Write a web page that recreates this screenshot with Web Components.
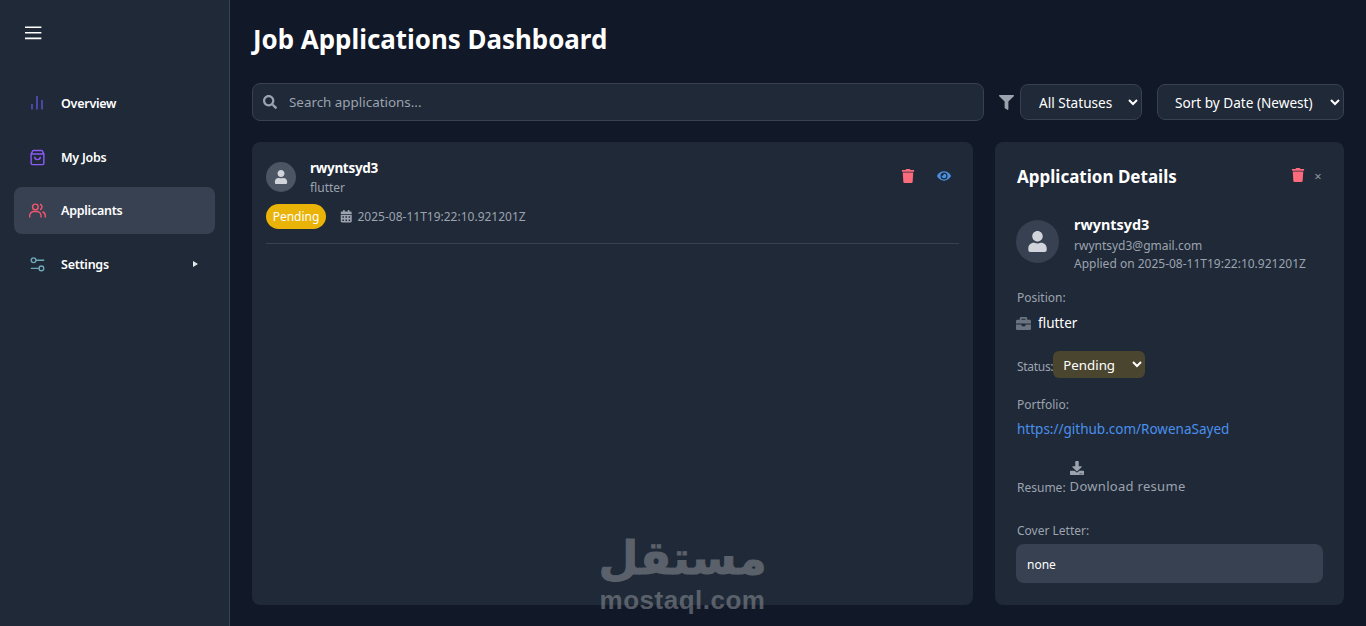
<!DOCTYPE html>
<html lang="en">
<head>
<meta charset="utf-8">
<title>Job Applications Dashboard</title>
<style>
html, body { margin: 0; height: 100%; background: #111827; }
body { font-family: "Noto Sans", "Open Sans", sans-serif; color: #fff; overflow: hidden; }
</style>
</head>
<body>
<dash-app></dash-app>
<script>
const ICONS = {
	user: ['0 0 448 512', 'M224 256c70.7 0 128-57.3 128-128S294.7 0 224 0 96 57.3 96 128s57.3 128 128 128zm89.6 32h-16.7c-22.2 10.2-46.9 16-72.9 16s-50.6-5.8-72.9-16h-16.7C60.2 288 0 348.2 0 422.4V464c0 26.5 21.5 48 48 48h352c26.5 0 48-21.5 48-48v-41.6c0-74.2-60.2-134.4-134.4-134.4z'],
	trash: ['0 0 448 512', 'M432 32H312l-9.4-18.7A24 24 0 0 0 281.1 0H166.8a23.72 23.72 0 0 0-21.4 13.3L136 32H16A16 16 0 0 0 0 48v32a16 16 0 0 0 16 16h416a16 16 0 0 0 16-16V48a16 16 0 0 0-16-16zM53.2 467a48 48 0 0 0 47.9 45h245.8a48 48 0 0 0 47.9-45L416 128H32z'],
	eye: ['0 0 576 512', 'M572.52 241.4C518.29 135.59 410.93 64 288 64S57.68 135.64 3.48 241.41a32.35 32.35 0 0 0 0 29.19C57.71 376.41 165.07 448 288 448s230.32-71.64 284.52-177.41a32.35 32.35 0 0 0 0-29.19zM288 400a144 144 0 1 1 144-144 143.93 143.93 0 0 1-144 144zm0-240a95.31 95.31 0 0 0-25.31 3.79 47.85 47.85 0 0 1-66.9 66.9A95.78 95.78 0 1 0 288 160z'],
	filter: ['0 0 512 512', 'M487.976 0H24.028C2.71 0-8.047 25.866 7.058 40.971L192 225.941V432c0 7.831 3.821 15.17 10.237 19.662l80 55.98C298.02 518.69 320 507.493 320 487.98V225.941l184.947-184.97C520.021 25.896 509.338 0 487.976 0z'],
	search: ['0 0 512 512', 'M505 442.7L405.3 343c-4.5-4.5-10.6-7-17-7H372c27.6-35.3 44-79.7 44-128C416 93.1 322.9 0 208 0S0 93.1 0 208s93.1 208 208 208c48.3 0 92.7-16.4 128-44v16.3c0 6.4 2.5 12.5 7 17l99.7 99.7c9.4 9.4 24.6 9.4 33.9 0l28.3-28.3c9.4-9.4 9.4-24.6.1-34zM208 336c-70.7 0-128-57.2-128-128 0-70.7 57.2-128 128-128 70.7 0 128 57.2 128 128 0 70.7-57.2 128-128 128z'],
	calendar: ['0 0 448 512', 'M0 464c0 26.5 21.5 48 48 48h352c26.5 0 48-21.5 48-48V192H0v272zm320-196c0-6.6 5.4-12 12-12h40c6.6 0 12 5.4 12 12v40c0 6.6-5.4 12-12 12h-40c-6.6 0-12-5.4-12-12v-40zm0 128c0-6.6 5.4-12 12-12h40c6.6 0 12 5.4 12 12v40c0 6.6-5.4 12-12 12h-40c-6.6 0-12-5.4-12-12v-40zM192 268c0-6.6 5.4-12 12-12h40c6.6 0 12 5.4 12 12v40c0 6.6-5.4 12-12 12h-40c-6.6 0-12-5.4-12-12v-40zm0 128c0-6.6 5.4-12 12-12h40c6.6 0 12 5.4 12 12v40c0 6.6-5.4 12-12 12h-40c-6.6 0-12-5.4-12-12v-40zM64 268c0-6.6 5.4-12 12-12h40c6.6 0 12 5.4 12 12v40c0 6.6-5.4 12-12 12H76c-6.6 0-12-5.4-12-12v-40zm0 128c0-6.6 5.4-12 12-12h40c6.6 0 12 5.4 12 12v40c0 6.6-5.4 12-12 12H76c-6.6 0-12-5.4-12-12v-40zM400 64h-48V16c0-8.8-7.2-16-16-16h-32c-8.8 0-16 7.2-16 16v48H160V16c0-8.8-7.2-16-16-16h-32c-8.8 0-16 7.2-16 16v48H48C21.5 64 0 85.5 0 112v48h448v-48c0-26.5-21.5-48-48-48z'],
	briefcase: ['0 0 512 512', 'M320 336c0 8.84-7.16 16-16 16h-96c-8.84 0-16-7.16-16-16v-48H0v144c0 25.6 22.4 48 48 48h416c25.6 0 48-22.4 48-48V288H320v48zm144-208h-80V80c0-25.6-22.4-48-48-48H176c-25.6 0-48 22.4-48 48v48H48c-25.6 0-48 22.4-48 48v80h512v-80c0-25.6-22.4-48-48-48zm-144 0H192V96h128v32z'],
	download: ['0 0 512 512', 'M216 0h80c13.3 0 24 10.7 24 24v168h87.7c17.8 0 26.7 21.5 14.1 34.1L269.7 378.3c-7.5 7.5-19.8 7.5-27.3 0L90.1 226.1c-12.6-12.6-3.7-34.1 14.1-34.1H192V24c0-13.3 10.7-24 24-24zm296 376v112c0 13.3-10.7 24-24 24H24c-13.3 0-24-10.7-24-24V376c0-13.3 10.7-24 24-24h146.7l49 49c20.1 20.1 52.5 20.1 72.6 0l49-49H488c13.3 0 24 10.7 24 24zm-124 88c0-11-9-20-20-20s-20 9-20 20 9 20 20 20 20-9 20-20zm64 0c0-11-9-20-20-20s-20 9-20 20 9 20 20 20 20-9 20-20z']
};
const NAV_ICONS = {
	overview: '<path d="M4.2 20.5v-7.8M11.3 20.5V1.4M18.4 20.5V7"/>',
	jobs: '<path d="M6.5 2h11a1.5 1.5 0 0 1 1.5 1l2 4v13a2 2 0 0 1-2 2H5a2 2 0 0 1-2-2V7l2-4a1.500 1.500 0 0 1 1.500-1zM3 7h18"/><path d="M8 11a4 4 0 0 0 8 0"/>',
	applicants: '<circle cx="9" cy="7" r="4"/><path d="M1 22v-2.500a6 6 0 0 1 6-6h4a6 6 0 0 1 6 6V22"/><path d="M15.500 3.200a4 4 0 0 1 0 7.700M19 13.800a6 6 0 0 1 4 5.700V22"/>',
	settings: '<circle cx="6.500" cy="6" r="3.300"/><circle cx="17.500" cy="17.500" r="3.300"/><path d="M10 6h11.500M2.500 17.500H14"/>'
};

class FaIcon extends HTMLElement {
	constructor() {
		super();
		const [box, d] = ICONS[this.getAttribute('name')];
		this.attachShadow({ mode: 'open' }).innerHTML = `<style>
:host { display: inline-flex; flex: none; width: var(--size, 14px); height: var(--size, 14px); color: inherit; }
svg { width: 100%; height: 100%; fill: currentColor; display: block; }
</style><svg viewBox="${box}"><path d="${d}"/></svg>`;
	}
}

class NavItem extends HTMLElement {
	constructor() {
		super();
		const icon = NAV_ICONS[this.getAttribute('icon')];
		const arrow = this.hasAttribute('arrow') ? '<span id="arrow"></span>' : '';
		this.attachShadow({ mode: 'open' }).innerHTML = `<style>
:host { display: flex; align-items: center; height: 47px; padding: 0 17px 0 15px; gap: 15px; border-radius: 8px; font-size: 12.5px; letter-spacing: -.25px; font-weight: 600; color: #fff; }
:host([active]) { background: #374151; }
svg { width: 17px; height: 17px; flex: none; fill: none; stroke: var(--c); stroke-width: 2; }
#label { flex: 1; }
#arrow { border-left: 5px solid #e5e7eb; border-top: 3px solid transparent; border-bottom: 3px solid transparent; }
</style><svg viewBox="0 0 24 24">${icon}</svg><span id="label"><slot></slot></span>${arrow}`;
	}
}

class AppSidebar extends HTMLElement {
	constructor() {
		super();
		this.attachShadow({ mode: 'open' }).innerHTML = `<style>
:host { display: flex; flex-direction: column; width: 229px; flex: none; box-sizing: content-box; background: #1f2937; border-right: 1px solid #374151; }
#burger { display: block; width: 17px; height: 14px; margin: 26px 0 0 25px; }
nav { display: flex; flex-direction: column; gap: 6px; margin: 39.850px 14px 0 14px; }
nav-item[icon="overview"], nav-item[icon="applicants"] { margin-bottom: 1px; }
</style>
<svg id="burger" viewBox="0 0 17 14" fill="none" stroke="#fff" stroke-width="1.6"><path d="M0 1.2h16.4M0 6.8h16.4M0 12.4h16.4"/></svg>
<nav>
<nav-item icon="overview" style="--c:#5b54d6">Overview</nav-item>
<nav-item icon="jobs" style="--c:#8b5cf6">My Jobs</nav-item>
<nav-item icon="applicants" active style="--c:#f0566f">Applicants</nav-item>
<nav-item icon="settings" arrow style="--c:#6fa8b8">Settings</nav-item>
</nav>`;
	}
}

class SearchBar extends HTMLElement {
	constructor() {
		super();
		this.attachShadow({ mode: 'open' }).innerHTML = `<style>
:host { display: flex; flex: 1; align-items: center; gap: 12px; height: 38px; box-sizing: border-box; padding: 0 10px; background: #1f2937; border: 1px solid #374151; border-radius: 8px; color: #9ca3af; }
fa-icon { --size: 14px; }
input { flex: 1; min-width: 0; background: none; border: 0; outline: 0; padding: 0 0 1px; font: 13.4px "Noto Sans", "Open Sans", sans-serif; color: #fff; }
input::placeholder { color: #9ca3af; opacity: 1; }
</style><fa-icon name="search"></fa-icon><input placeholder="Search applications...">`;
	}
}

class FilterBar extends HTMLElement {
	constructor() {
		super();
		this.attachShadow({ mode: 'open' }).innerHTML = `<style>
:host { display: flex; align-items: center; }
fa-icon { --size: 15px; color: #9ca3af; margin: 0 6px 0 15px; }
select { height: 36px; padding: 0 2px 0 14px; background: #1f2937; color: #fff; border: 1px solid #374151; border-radius: 8px; font: 13.6px "Noto Sans", "Open Sans", sans-serif; outline: 0; }
#st { width: 122px; }
#so { width: 187px; margin-left: 15px; padding-left: 13px; }
</style>
<fa-icon name="filter"></fa-icon>
<select id="st"><option>All Statuses</option></select>
<select id="so"><option>Sort by Date (Newest)</option></select>`;
	}
}

class AppCard extends HTMLElement {
	constructor() {
		super();
		this.attachShadow({ mode: 'open' }).innerHTML = `<style>
:host { display: flex; flex-direction: column; padding: 20px 14px; background: #1f2937; border-radius: 8px; min-width: 0; box-sizing: border-box; }
#top { display: flex; gap: 14px; align-items: center; height: 30px; }
#avatar { width: 30px; height: 30px; border-radius: 50%; background: #4b5563; color: #d1d5db; display: flex; align-items: center; justify-content: center; --size: 14px; }
#who { flex: 1; display: flex; flex-direction: column; margin-top: 4px; }
#name { font-size: 13.5px; letter-spacing: -.3px; font-weight: 700; line-height: 19px; margin-top: -1px; }
#job { font-size: 12px; color: #9ca3af; line-height: 20px; }
#actions { display: flex; gap: 22px; padding-right: 8px; align-self: flex-start; margin-top: 7px; }
#del { color: #fb6b7c; --size: 14px; }
#view { color: #4a90e2; --size: 14px; }
#meta { display: flex; align-items: center; margin-top: 12px; padding-bottom: 14px; border-bottom: 1px solid #374151; }
#pill { height: 25px; width: 60px; border-radius: 13px; background: #eab308; font-size: 12px; display: flex; align-items: center; justify-content: center; }
#date { display: flex; align-items: center; gap: 5px; margin-left: 14px; font-size: 12px; color: #9ca3af; --size: 12.5px; }
</style>
<div id="top">
<div id="avatar"><fa-icon name="user"></fa-icon></div>
<div id="who"><span id="name">rwyntsyd3</span><span id="job">flutter</span></div>
<div id="actions"><fa-icon id="del" name="trash"></fa-icon><fa-icon id="view" name="eye"></fa-icon></div>
</div>
<div id="meta"><span id="pill">Pending</span><span id="date"><fa-icon name="calendar"></fa-icon>2025-08-11T19:22:10.921201Z</span></div>`;
	}
}

class DetailsPanel extends HTMLElement {
	constructor() {
		super();
		this.attachShadow({ mode: 'open' }).innerHTML = `<style>
:host { display: flex; flex-direction: column; padding: 0 21px; background: #1f2937; border-radius: 8px; box-sizing: border-box; font-size: 12px; color: #9ca3af; }
#head { display: flex; align-items: center; height: 68px; }
h2 { flex: 1; margin: 0; padding-left: 1px; font-size: 17px; font-weight: 700; color: #fff; }
#del { color: #fb6b7c; --size: 14px; margin-top: -2px; }
#close { color: #8b95a5; font-size: 13px; margin-left: 8px; width: 10px; text-align: center; }
#who { display: flex; gap: 15px; margin-top: 10px; height: 57px; }
#avatar { width: 43px; height: 43px; border-radius: 50%; background: #374151; color: #d1d5db; display: flex; align-items: center; justify-content: center; --size: 21px; flex: none; }
#info { display: flex; flex-direction: column; line-height: 18px; margin-top: -5px; }
#name { font-size: 14.4px; font-weight: 700; color: #fff; line-height: 20px; margin-bottom: 2px; }
.label { display: block; padding-left: 1px; }
#pos { margin-top: 12px; }
#posv { display: flex; align-items: center; gap: 7px; margin-top: 8px; color: #fff; font-size: 13.5px; }
#posv fa-icon { --size: 15px; color: #6b7280; }
#status { display: flex; align-items: center; margin-top: 19px; padding-left: 1px; }
#status span { margin-top: 3px; letter-spacing: -.3px; }
select { width: 92px; height: 27px; padding: 0 0 0 6px; background: #4a452e; color: #fff; border: 0; border-radius: 6px; font: 13.3px "Noto Sans", "Open Sans", sans-serif; outline: 0; }
#port { margin-top: 18px; }
a { display: block; margin-top: 7px; padding-left: 1px; color: #4a90ee; font-size: 13.5px; text-decoration: none; }
#res { display: flex; align-items: flex-end; gap: 4px; margin-top: 23px; padding-left: 1px; }
#res > span { margin-bottom: -1px; }
#dl { display: flex; flex-direction: column; align-items: flex-start; font-size: 13px; letter-spacing: .3px; }
#dl fa-icon { --size: 14px; color: #9ca3af; margin-bottom: 2px; }
#cov { margin-top: 27px; }
#box { margin-top: 5px; height: 39px; box-sizing: border-box; padding: 1px 11px 0; background: #374151; border-radius: 8px; color: #fff; display: flex; align-items: center; font-size: 12px; }
</style>
<div id="head"><h2>Application Details</h2><fa-icon id="del" name="trash"></fa-icon><span id="close">×</span></div>
<div id="who"><div id="avatar"><fa-icon name="user"></fa-icon></div><div id="info"><span id="name">rwyntsyd3</span><span>rwyntsyd3@gmail.com</span><span>Applied on 2025-08-11T19:22:10.921201Z</span></div></div>
<span class="label" id="pos">Position:</span>
<div id="posv"><fa-icon name="briefcase"></fa-icon>flutter</div>
<div id="status"><span>Status:</span><select><option>Pending</option></select></div>
<span class="label" id="port">Portfolio:</span>
<a href="#">https://github.com/RowenaSayed</a>
<div id="res"><span>Resume:</span><div id="dl"><fa-icon name="download"></fa-icon>Download resume</div></div>
<span class="label" id="cov">Cover Letter:</span>
<div id="box">none</div>`;
	}
}

class MostaqlMark extends HTMLElement {
	constructor() {
		super();
		this.attachShadow({ mode: 'open' }).innerHTML = `<style>
:host { position: absolute; left: 580px; top: 531px; width: 205px; display: flex; flex-direction: column; align-items: center; color: #8b8f96; opacity: .55; pointer-events: none; }
#ar { font: 700 46px/54px "DejaVu Sans", sans-serif; -webkit-text-stroke: 1px #8b8f96; }
#en { font: 700 26px/30px "Liberation Sans", Arial, sans-serif; letter-spacing: .5px; }
</style><span id="ar" lang="ar" dir="rtl">مستقل</span><span id="en">mostaql.com</span>`;
	}
}

class DashApp extends HTMLElement {
	constructor() {
		super();
		this.attachShadow({ mode: 'open' }).innerHTML = `<style>
:host { display: flex; height: 626px; background: #111827; position: relative; overflow: hidden; }
main { flex: 1; min-width: 0; display: flex; flex-direction: column; padding: 0 22px 21px; }
h1 { margin: 0; height: 83px; display: flex; align-items: center; font-size: 25.9px; font-weight: 700; color: #fff; padding: 0 0 5px 1px; box-sizing: border-box; }
#tools { display: flex; align-items: center; }
#grid { flex: 1; min-height: 0; display: grid; grid-template-columns: 1fr 349px; gap: 22px; margin-top: 21px; }
</style>
<app-sidebar></app-sidebar>
<main>
<h1>Job Applications Dashboard</h1>
<div id="tools"><search-bar></search-bar><filter-bar></filter-bar></div>
<div id="grid"><app-card></app-card><details-panel></details-panel></div>
</main>
<mostaql-mark></mostaql-mark>`;
	}
}

customElements.define('fa-icon', FaIcon);
customElements.define('nav-item', NavItem);
customElements.define('app-sidebar', AppSidebar);
customElements.define('search-bar', SearchBar);
customElements.define('filter-bar', FilterBar);
customElements.define('app-card', AppCard);
customElements.define('details-panel', DetailsPanel);
customElements.define('mostaql-mark', MostaqlMark);
customElements.define('dash-app', DashApp);
</script>
</body>
</html>
